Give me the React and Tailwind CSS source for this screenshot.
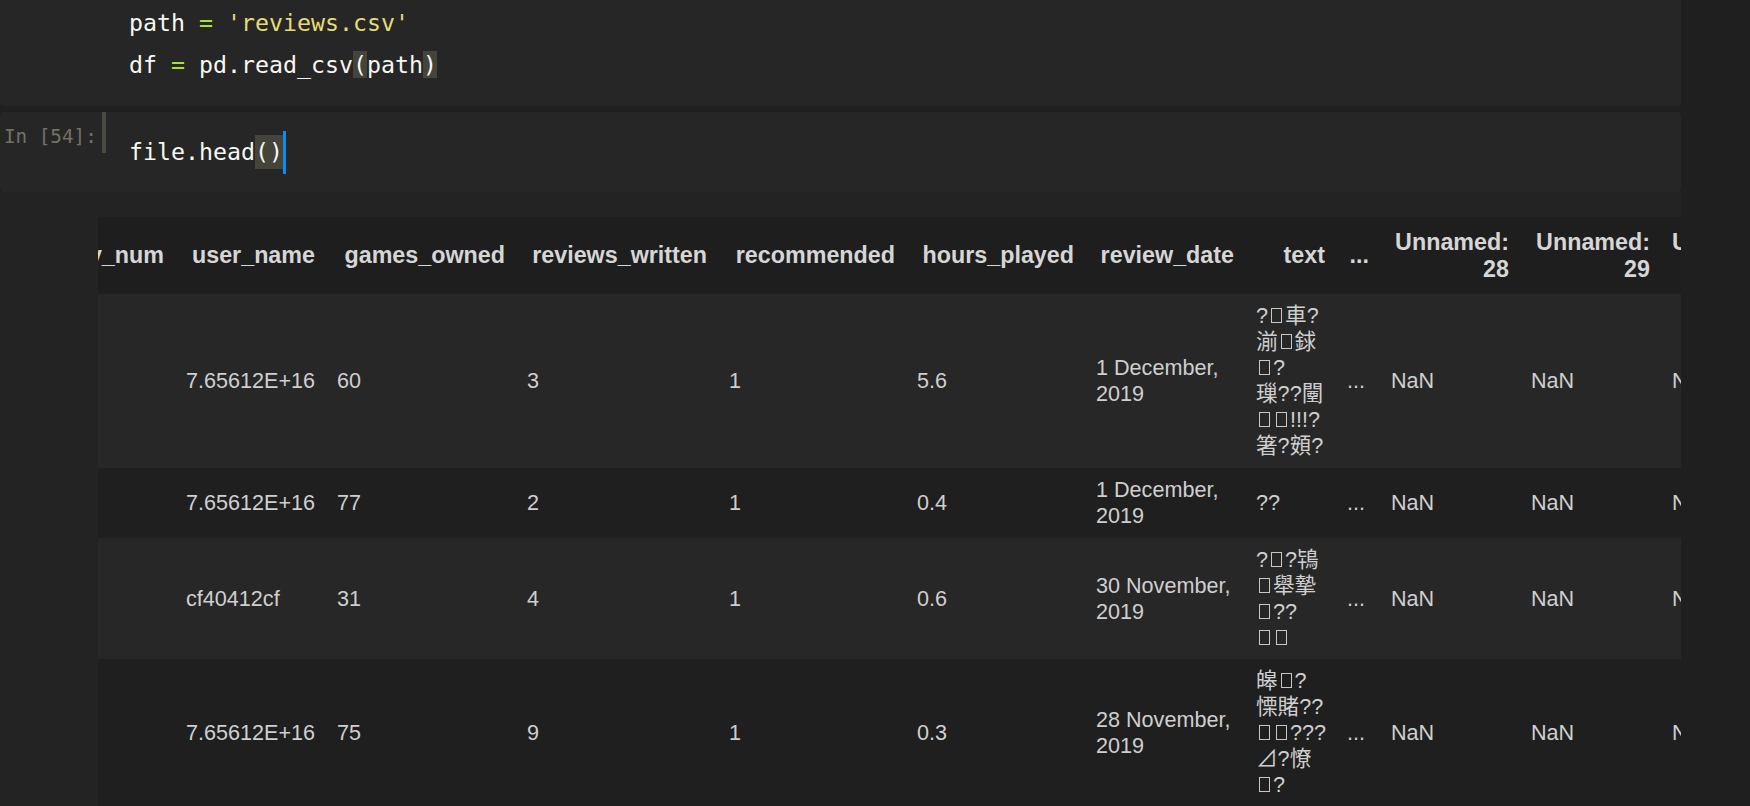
const mono = { fontFamily: '"DejaVu Sans Mono", "Liberation Mono", monospace' };

const cols =
  "grid grid-cols-[160px_151px_190px_202px_188px_179px_160px_91px_44px_140px_141px_136px]";

const headers = [
  "entry_num",
  "user_name",
  "games_owned",
  "reviews_written",
  "recommended",
  "hours_played",
  "review_date",
  "text",
  "...",
  ["Unnamed:", "28"],
  ["Unnamed:", "29"],
  ["Unnamed:", "30"],
];

// "#" marks a missing-glyph box
const rows = [
  {
    h: "h-[174px]",
    bg: "bg-[#272727]",
    cells: ["", "7.65612E+16", "60", "3", "1", "5.6", ["1 December,", "2019"]],
    text: ["?#車?", "湔#銶", "#?", "璅??闉", "##!!!?", "箸?頞?"],
  },
  {
    h: "h-[70px]",
    bg: "bg-[#1f1f1f]",
    cells: ["", "7.65612E+16", "77", "2", "1", "0.4", ["1 December,", "2019"]],
    text: ["??"],
  },
  {
    h: "h-[121px]",
    bg: "bg-[#272727]",
    cells: ["", "cf40412cf", "31", "4", "1", "0.6", ["30 November,", "2019"]],
    text: ["?#?鴇", "#舉摯", "#??", "##"],
  },
  {
    h: "h-[148px]",
    bg: "bg-[#1f1f1f]",
    cells: ["", "7.65612E+16", "75", "9", "1", "0.3", ["28 November,", "2019"]],
    text: ["皞#?", "慄賭??", "##???", "⊿?憭", "#?"],
  },
];

function Tofu() {
  return <span className="inline-block w-[11px] h-[15px] mx-[3px] border border-[#c8c8c8]" />;
}

function TextLine({ line }) {
  return (
    <div className="whitespace-nowrap">
      {line.split("").map((ch, i) => (ch === "#" ? <Tofu key={i} /> : <span key={i}>{ch}</span>))}
    </div>
  );
}

function Lines({ value }) {
  if (Array.isArray(value)) {
    return (
      <div>
        {value.map((v) => (
          <div key={v} className="whitespace-nowrap">{v}</div>
        ))}
      </div>
    );
  }
  return <span className="whitespace-nowrap">{value}</span>;
}

function Paren({ children }) {
  return <span className="bg-[#45443b]">{children}</span>;
}

export default function App() {
  return (
    <div className="w-[1750px] h-[806px] overflow-hidden bg-[#1f1f1f] flex">
      <div className="w-[1681px] flex flex-col">
        {/* previous cell */}
        <div
          className="bg-[#262626] rounded-b-[4px] pl-[129px] pt-[2px] pb-[20px] text-[23.25px] leading-[42px] text-[#f8f8f2]"
          style={mono}
        >
          <div className="whitespace-pre">
            path <span className="text-[#a6e22e]">=</span> <span className="text-[#e6db74]">'reviews.csv'</span>
          </div>
          <div className="whitespace-pre">
            df <span className="text-[#a6e22e]">=</span> pd.read_csv<Paren>(</Paren>path<Paren>)</Paren>
          </div>
        </div>

        {/* active cell */}
        <div className="mt-[6px] h-[80px] bg-[#262626] rounded-[4px] flex" style={mono}>
          <div className="w-[102px] pl-[4px] pt-[14px] text-[19.25px] leading-[22px] text-[#727262] whitespace-pre">
            In [54]:
          </div>
          <div className="w-[4px] h-[41px] bg-[#4a4a42]" />
          <div className="pl-[23px] pt-[19px]">
            <div className="h-[42px] flex items-center text-[23.25px] text-[#f8f8f2] whitespace-pre">
              file.head<Paren>()</Paren>
              <span className="inline-block w-[3px] h-[43px] bg-[#0e8cf0]" />
            </div>
          </div>
        </div>

        {/* output */}
        <div
          className="flex-1 bg-[#232323] pt-[25px] pl-[98px] overflow-hidden"
          style={{ fontFamily: '"Liberation Sans", Arial, "Noto Sans CJK TC", sans-serif' }}
        >
          <div className="w-[1583px] overflow-hidden">
            <div className="ml-[-83px] w-[1782px]">
              <div className={`${cols} h-[77px] bg-[#1e1e1e] text-[23.3px] leading-[27px] font-bold text-[#d6d6d6]`}>
                {headers.map((h, i) => (
                  <div key={i} className="flex items-center justify-end px-[11px] text-right whitespace-nowrap">
                    {Array.isArray(h) ? (
                      <div>
                        <div>{h[0]}</div>
                        <div>{h[1]}</div>
                      </div>
                    ) : (
                      h
                    )}
                  </div>
                ))}
              </div>

              {rows.map((r, ri) => (
                <div key={ri} className={`${cols} ${r.h} ${r.bg} text-[21.6px] leading-[26px] text-[#cfcfcf]`}>
                  {r.cells.map((c, ci) => (
                    <div key={ci} className="flex items-center px-[11px]">
                      <Lines value={c} />
                    </div>
                  ))}
                  <div className="flex items-center px-[11px]">
                    <div>
                      {r.text.map((t, ti) => (
                        <TextLine key={ti} line={t} />
                      ))}
                    </div>
                  </div>
                  <div className="flex items-center px-[11px]">...</div>
                  <div className="flex items-center px-[11px]">NaN</div>
                  <div className="flex items-center px-[11px]">NaN</div>
                  <div className="flex items-center px-[11px]">NaN</div>
                </div>
              ))}
            </div>
          </div>
        </div>
      </div>
      <div className="flex-1" />
    </div>
  );
}
